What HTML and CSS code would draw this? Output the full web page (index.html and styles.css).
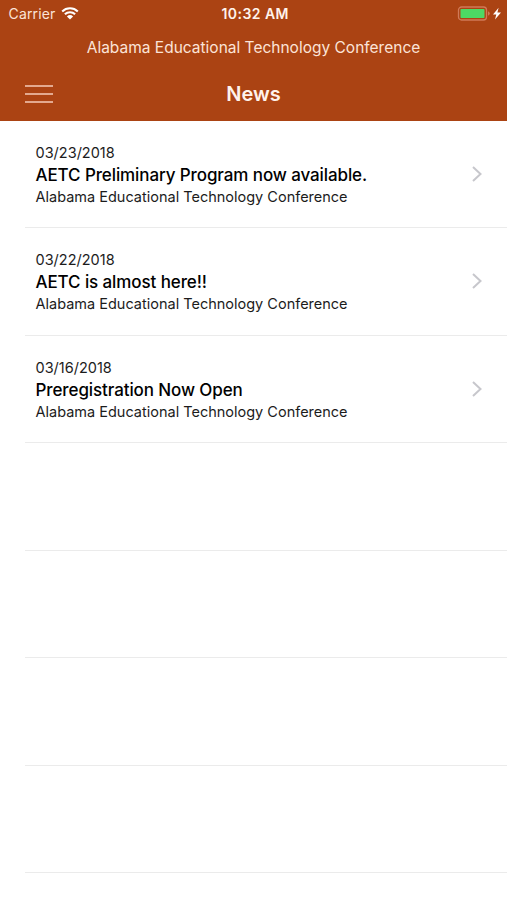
FILE: index.html
```html
<!DOCTYPE html>
<html lang="en">
<head>
  <meta charset="UTF-8">
  <meta name="viewport" content="width=device-width, initial-scale=1.0">
  <title>News</title>
  <link rel="stylesheet" href="styles.css">
</head>
<body>
  <header class="header">
    <div class="status-bar">
      <div class="carrier">
        <span>Carrier</span>
        <svg class="wifi" width="18" height="13" viewBox="0 0 18 13">
          <path d="M1.2 4.4a11.3 11.3 0 0 1 15.6 0M3.9 7.3a7.3 7.3 0 0 1 10.2 0" fill="none" stroke="#fff" stroke-width="2.1"/>
          <path d="M9 12.6 5.9 9.4a4.5 4.5 0 0 1 6.2 0z" fill="#fff"/>
        </svg>
      </div>
      <div class="time">10:32 AM</div>
      <div class="power">
        <svg width="45" height="15" viewBox="0 0 45 15">
          <rect x="1.500" y="1" width="28" height="13" rx="3" fill="none" stroke="#d07a58" stroke-width="1.3"/>
          <rect x="3.500" y="3" width="24" height="9" rx="0.8" fill="#4cd964"/>
          <path d="M31 5.3q1.800.7 1.800 2.200T31 9.700z" fill="#d07a58"/>
          <path d="M41.6 1.800 36 8.500h3.300L38 13.500 44 6.500h-3.600z" fill="#fff"/>
        </svg>
      </div>
    </div>
    <div class="subtitle">Alabama Educational Technology Conference</div>
    <nav class="nav-bar">
      <button class="menu-btn" aria-label="Menu">
        <span></span>
        <span></span>
        <span></span>
      </button>
      <h1>News</h1>
    </nav>
  </header>

  <ul class="news-list">
    <li class="news-item">
      <div class="news-text">
        <p class="date">03/23/2018</p>
        <h2>AETC Preliminary Program now available.</h2>
        <p class="source">Alabama Educational Technology Conference</p>
      </div>
      <svg class="chevron" width="12" height="18" viewBox="0 0 12 18"><path d="M2 2l7.500 7L2 16"/></svg>
    </li>
    <li class="news-item">
      <div class="news-text">
        <p class="date">03/22/2018</p>
        <h2>AETC is almost here!!</h2>
        <p class="source">Alabama Educational Technology Conference</p>
      </div>
      <svg class="chevron" width="12" height="18" viewBox="0 0 12 18"><path d="M2 2l7.500 7L2 16"/></svg>
    </li>
    <li class="news-item">
      <div class="news-text">
        <p class="date">03/16/2018</p>
        <h2>Preregistration Now Open</h2>
        <p class="source">Alabama Educational Technology Conference</p>
      </div>
      <svg class="chevron" width="12" height="18" viewBox="0 0 12 18"><path d="M2 2l7.500 7L2 16"/></svg>
    </li>
    <li class="news-item"></li>
    <li class="news-item"></li>
    <li class="news-item"></li>
    <li class="news-item"></li>
  </ul>
</body>
</html>
```
FILE: styles.css
```css
* {
  box-sizing: border-box;
}
body {
  font-family: Inter, 'Liberation Sans', sans-serif;
  background-color: #fff;
  color: #1c1c1c;
  margin: 0;
  height: 900px;
  overflow: hidden;
}
.header {
  background-color: #ab4313;
  color: #fff;
  height: 120.5px;
}
.status-bar {
  display: grid;
  grid-template-columns: 1fr auto 1fr;
  align-items: center;
  height: 27px;
  padding: 0 5px 0 8.5px;
}
.carrier {
  display: flex;
  align-items: center;
  gap: 6px;
  font-size: 14px;
  letter-spacing: 0.15px;
  color: #fbe3d8;
}
.time {
  font-size: 14px;
  font-weight: 600;
  letter-spacing: 0.45px;
  color: #fff3ec;
}
.power {
  display: flex;
  justify-content: flex-end;
}
.subtitle {
  height: 40px;
  line-height: 41px;
  text-align: center;
  font-size: 15.5px;
  color: #fbe3d8;
}
.nav-bar {
  display: grid;
  grid-template-columns: 1fr auto 1fr;
  align-items: center;
  height: 53px;
  padding: 0 25px;
}
.menu-btn {
  display: flex;
  flex-direction: column;
  gap: 6px;
  width: 28px;
  padding: 0;
  border: none;
  background: none;
}
.menu-btn span {
  width: 28px;
  height: 2px;
  background-color: #e3a98f;
}
h1 {
  margin: 0;
  font-size: 20px;
  font-weight: 600;
  color: #fff3ec;
}
.news-list {
  list-style: none;
  margin: 0 0 0 25px;
  padding: 0;
}
.news-item {
  display: flex;
  justify-content: space-between;
  align-items: center;
  height: 107.5px;
  padding: 0 24px 0 10.5px;
  border-bottom: 1px solid #ebebeb;
}
.news-text {
  padding-top: 1.5px;
}
.date,
.source {
  margin: 0;
  font-size: 14.5px;
  line-height: 22px;
}
.date {
  font-kerning: none;
}
h2 {
  margin: 0;
  font-size: 17px;
  font-weight: 500;
  line-height: 22px;
  letter-spacing: -0.1px;
  color: #000;
}
.chevron {
  fill: none;
  stroke: #c7c7cc;
  stroke-width: 2;
}
```
